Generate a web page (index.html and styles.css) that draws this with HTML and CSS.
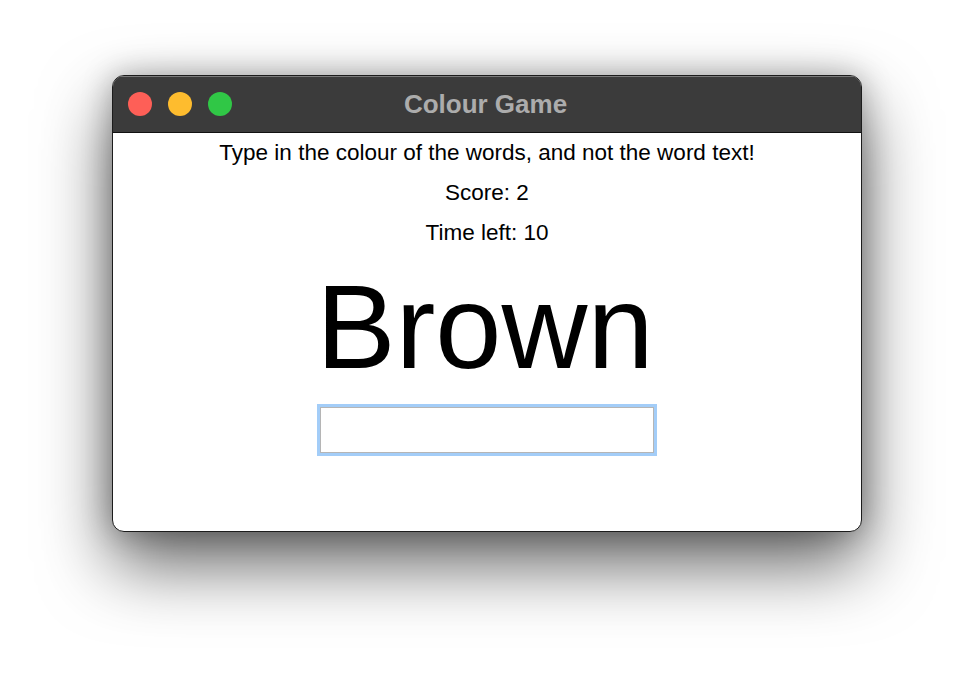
FILE: index.html
```html
<!DOCTYPE html>
<html>
<head>
<meta charset="utf-8">
<link rel="stylesheet" href="styles.css">
</head>
<body>
<div class="stage">
  <div class="window">
    <div class="titlebar">
      <div class="lights">
        <span class="light red"></span>
        <span class="light yellow"></span>
        <span class="light green"></span>
      </div>
      <div class="title">Colour Game</div>
    </div>
    <div class="content">
      <div class="line">Type in the colour of the words, and not the word text!</div>
      <div class="line">Score: 2</div>
      <div class="line">Time left: 10</div>
      <div class="word">Brown</div>
      <input class="entry" type="text">
    </div>
  </div>
</div>
</body>
</html>
```

FILE: styles.css
```css
html, body {
  margin: 0;
  padding: 0;
  background: #ffffff;
}
.stage {
  padding: 75px 0 0 112px;
  width: 974px;
  height: 680px;
  box-sizing: border-box;
}
.window {
  width: 750px;
  height: 457px;
  box-sizing: border-box;
  border: 1px solid #1c1c1c;
  border-radius: 12px;
  background: #ffffff;
  overflow: hidden;
  box-shadow: 0 32px 70px rgba(0, 0, 0, 0.62), 0 0 30px rgba(0, 0, 0, 0.28);
  display: flex;
  flex-direction: column;
}
.titlebar {
  height: 56px;
  background: #3b3b3b;
  border-bottom: 1px solid #111;
  box-shadow: inset 0 1px 0 #7a7a7a;
  position: relative;
  display: flex;
  align-items: center;
  justify-content: center;
  flex-shrink: 0;
}
.lights {
  position: absolute;
  left: 15px;
  top: 16px;
  display: flex;
  gap: 16px;
}
.light {
  width: 24px;
  height: 24px;
  border-radius: 50%;
  display: block;
}
.red { background: #fe5f57; }
.yellow { background: #febc2e; }
.green { background: #30c746; }
.title {
  font-family: "Liberation Sans", Arial, sans-serif;
  font-weight: bold;
  font-size: 26px;
  color: #acacac;
  margin-top: 0;
  margin-left: -3px;
}
.content {
  display: flex;
  flex-direction: column;
  align-items: center;
  font-family: "Liberation Sans", Arial, sans-serif;
  color: #000;
}
.line {
  font-size: 22.5px;
  line-height: 40px;
  height: 40px;
}
.word {
  font-size: 119px;
  line-height: 148px;
  height: 148px;
  margin-left: -4px;
}
.entry {
  margin-top: 6px;
  width: 334px;
  height: 46px;
  box-sizing: border-box;
  border: 1px solid #b5b5b5;
  background: #fff;
  outline: none;
  box-shadow: 0 0 0 3px #a3cdf8;
  padding: 0;
}
```
